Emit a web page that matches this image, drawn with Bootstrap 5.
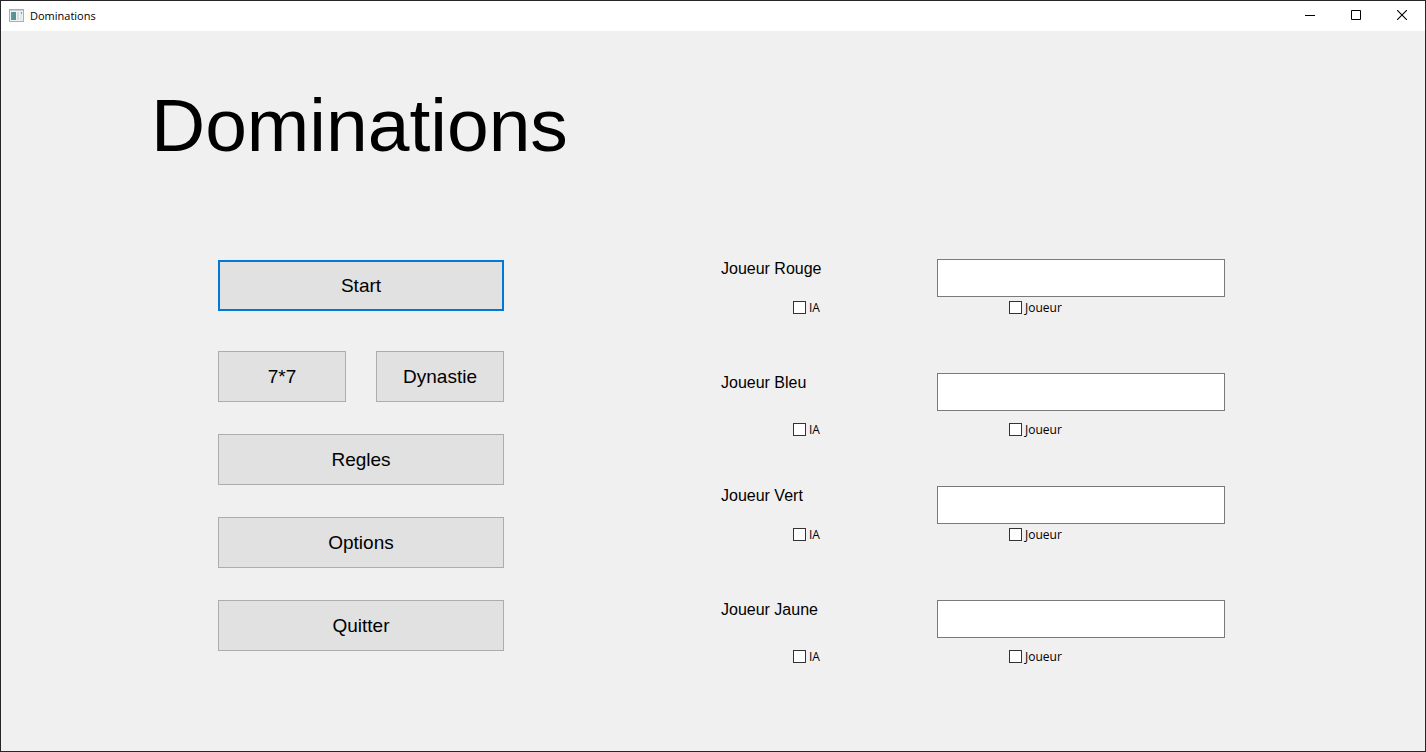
<!DOCTYPE html>
<html lang="fr">
<head>
<meta charset="utf-8">
<meta name="viewport" content="width=device-width, initial-scale=1">
<title>Dominations</title>
<link href="https://cdn.jsdelivr.net/npm/bootstrap@5.3.0/dist/css/bootstrap.min.css" rel="stylesheet">
<style>
  body { font-family: "Open Sans", "Noto Sans", sans-serif; font-size: 12px; line-height: 16px; color: #000; background: #f0f0f0; }
  .app-window { border: 1px solid #262427; background: #f0f0f0; }
  .title-bar { height: 30px; gap: 5px; }
  .title-text { font-size: 11px; }
  .caption-btn { width: 46px; height: 30px; padding: 0 0 2px; color: #000; }
  .caption-btn:hover { background: #e5e5e5; }
  .menu-grid { display: grid; grid-template-columns: 217fr 286fr 217fr 504fr 200fr; }
  .menu-title { font: 75px/88px "Liberation Sans", Arial, sans-serif; grid-column: 1 / -1; padding: 50px 0 0 150px; margin: 0 0 90px; }
  .menu-actions { grid-column: 2; gap: 32px; padding-top: 1px; }
  .menu-players { grid-column: 4; display: grid; grid-template-rows: 114px 113px 114px auto; align-content: start; }
  .menu-btn { height: 51px; padding: 0; border: 1px solid #adadad; border-radius: 0; background: #e1e1e1; color: #000; font: 19px/24px "Liberation Sans", Arial, sans-serif; }
  .menu-btn:hover { background: #e5f1fb; border-color: #0078d7; }
  .menu-btn-default { border: 2px solid #0078d7; }
  .btn-pair { display: grid; grid-template-columns: 1fr 1fr; gap: 30px; }
  .player { display: grid; grid-template-columns: 3fr 4fr; grid-template-rows: 38px auto; align-content: start; row-gap: 4px; }
  .player-spaced { row-gap: 12px; }
  .player-name { font: 16px/20px "Liberation Sans", Arial, sans-serif; }
  .player-field { height: 38px; padding: 0 8px; border: 1px solid #7a7a7a; border-radius: 0; font-size: 16px; }
  .option { gap: 3px; height: 13px; }
  .option-first { margin-left: 33.3333%; }
  .option-second { margin-left: 25%; }
  .tick { appearance: none; width: 13px; height: 13px; border: 1px solid #333; background: #fff; }
  .tick:checked { background: #333; box-shadow: inset 0 0 0 2px #fff; }
</style>
</head>
<body>
<div class="app-window min-vh-100">
  <header class="title-bar d-flex align-items-center bg-white">
    <svg class="ms-2" width="16" height="16" viewBox="0 0 16 16" aria-hidden="true">
      <rect x=".5" y="1.5" width="14" height="12" fill="#eef3f5" stroke="#a4b0b8"/>
      <path d="M1 2.5h13" stroke="#c3d0da"/>
      <rect x="2" y="4" width="5" height="8" fill="#4f968b"/>
      <path d="M2 4h2v8h-2z" fill="#6793a0"/>
      <path d="M8 4h2v8h-2z" fill="#d4dde2"/>
      <path d="M11 4h2v8h-2z" fill="#e3e6ea"/>
      <path d="M12 4h1v2h-1z" fill="#7d9ca4"/>
    </svg>
    <span class="title-text flex-grow-1">Dominations</span>
    <div class="d-flex">
      <button class="btn caption-btn border-0 rounded-0 d-flex align-items-center justify-content-center" type="button" aria-label="Réduire">
        <svg width="10" height="10" viewBox="0 0 10 10"><path d="M0 5.5h10" stroke="#000"/></svg>
      </button>
      <button class="btn caption-btn border-0 rounded-0 d-flex align-items-center justify-content-center" type="button" aria-label="Agrandir">
        <svg width="10" height="10" viewBox="0 0 10 10"><path d="M.5.5h9v9h-9z" fill="none" stroke="#000"/></svg>
      </button>
      <button class="btn caption-btn border-0 rounded-0 d-flex align-items-center justify-content-center" type="button" aria-label="Fermer">
        <svg width="10" height="10" viewBox="0 0 10 10"><path d="M0 0l10 10M10 0L0 10" stroke="#000" stroke-width="1.1"/></svg>
      </button>
    </div>
  </header>
  <main class="menu-grid">
    <h1 class="menu-title">Dominations</h1>
    <div class="menu-actions d-flex flex-column">
      <button class="btn menu-btn menu-btn-default mb-2" type="button">Start</button>
      <div class="btn-pair">
        <button class="btn menu-btn" type="button">7*7</button>
        <button class="btn menu-btn" type="button">Dynastie</button>
      </div>
      <button class="btn menu-btn" type="button">Regles</button>
      <button class="btn menu-btn" type="button">Options</button>
      <button class="btn menu-btn" type="button">Quitter</button>
    </div>
    <form class="menu-players">
      <div class="player">
        <label class="player-name" for="rouge">Joueur Rouge</label>
        <input class="form-control player-field" type="text" id="rouge">
        <div class="option option-first d-flex align-items-center"><input class="tick" type="checkbox" id="rouge-ia"><label for="rouge-ia">IA</label></div>
        <div class="option option-second d-flex align-items-center"><input class="tick" type="checkbox" id="rouge-joueur"><label for="rouge-joueur">Joueur</label></div>
      </div>
      <div class="player player-spaced">
        <label class="player-name" for="bleu">Joueur Bleu</label>
        <input class="form-control player-field" type="text" id="bleu">
        <div class="option option-first d-flex align-items-center"><input class="tick" type="checkbox" id="bleu-ia"><label for="bleu-ia">IA</label></div>
        <div class="option option-second d-flex align-items-center"><input class="tick" type="checkbox" id="bleu-joueur"><label for="bleu-joueur">Joueur</label></div>
      </div>
      <div class="player">
        <label class="player-name" for="vert">Joueur Vert</label>
        <input class="form-control player-field" type="text" id="vert">
        <div class="option option-first d-flex align-items-center"><input class="tick" type="checkbox" id="vert-ia"><label for="vert-ia">IA</label></div>
        <div class="option option-second d-flex align-items-center"><input class="tick" type="checkbox" id="vert-joueur"><label for="vert-joueur">Joueur</label></div>
      </div>
      <div class="player player-spaced">
        <label class="player-name" for="jaune">Joueur Jaune</label>
        <input class="form-control player-field" type="text" id="jaune">
        <div class="option option-first d-flex align-items-center"><input class="tick" type="checkbox" id="jaune-ia"><label for="jaune-ia">IA</label></div>
        <div class="option option-second d-flex align-items-center"><input class="tick" type="checkbox" id="jaune-joueur"><label for="jaune-joueur">Joueur</label></div>
      </div>
    </form>
  </main>
</div>
<script src="https://cdn.jsdelivr.net/npm/bootstrap@5.3.0/dist/js/bootstrap.bundle.min.js"></script>
</body>
</html>
